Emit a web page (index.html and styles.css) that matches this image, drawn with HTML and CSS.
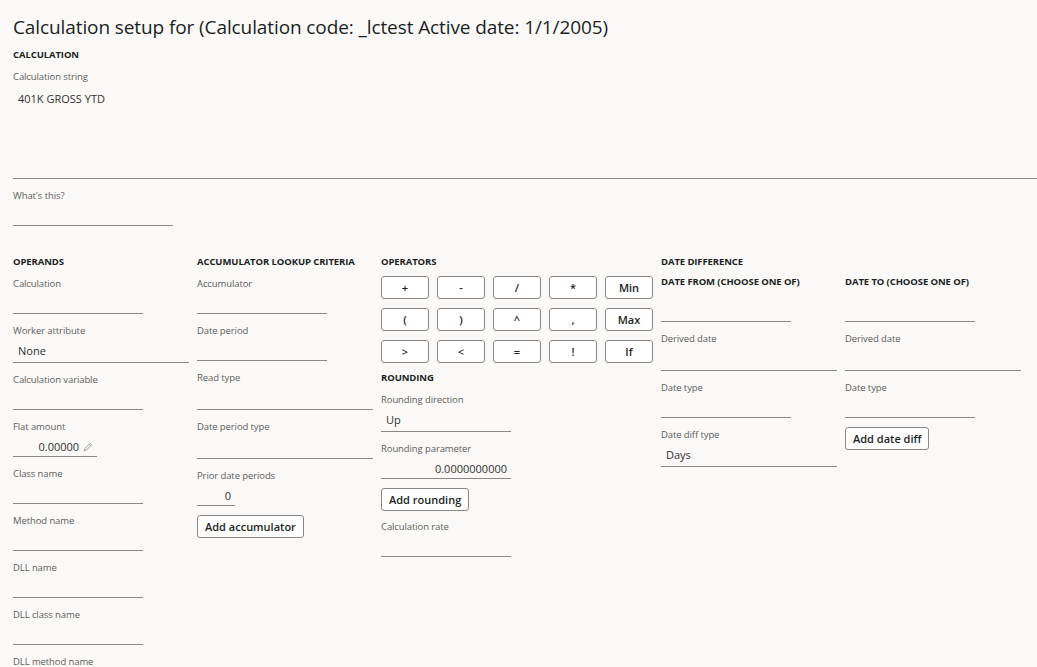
FILE: index.html
```html
<!DOCTYPE html>
<html lang="en">
<head>
    <meta charset="UTF-8">
    <meta name="viewport" content="width=device-width, initial-scale=1.0">
    <title>Calculation setup</title>
    <link rel="stylesheet" href="styles.css">
</head>
<body>

<div class="page">
    <h1 class="page-title">Calculation setup for (Calculation code: _lctest Active date: 1/1/2005)</h1>

    <!-- Calculation string -->
    <h2 class="group-head">Calculation</h2>
    <div class="field">
        <label class="field-label">Calculation string</label>
        <div class="textarea">401K GROSS YTD</div>
    </div>
    <div class="field">
        <label class="field-label">What's this?</label>
        <div class="input w160"></div>
    </div>

    <div class="sections">

        <!-- Operands -->
        <div class="col">
            <h2 class="group-head">Operands</h2>
            <div class="field">
                <label class="field-label">Calculation</label>
                <div class="input w130"></div>
            </div>
            <div class="field">
                <label class="field-label">Worker attribute</label>
                <div class="input select w176">None</div>
            </div>
            <div class="field">
                <label class="field-label">Calculation variable</label>
                <div class="input w130"></div>
            </div>
            <div class="field">
                <label class="field-label">Flat amount</label>
                <div class="input w84 num">0.00000
                    <svg class="pencil" width="10" height="10" viewBox="0 0 10 10"><path d="M7.2 1.3 L8.7 2.8 L3.4 8.1 L1.3 8.7 L1.9 6.6 Z M6.2 2.3 L7.7 3.8" fill="none" stroke="#8a8886" stroke-width="0.8" stroke-linejoin="round"/></svg>
                </div>
            </div>
            <div class="field">
                <label class="field-label">Class name</label>
                <div class="input w130"></div>
            </div>
            <div class="field">
                <label class="field-label">Method name</label>
                <div class="input w130"></div>
            </div>
            <div class="field">
                <label class="field-label">DLL name</label>
                <div class="input w130"></div>
            </div>
            <div class="field">
                <label class="field-label">DLL class name</label>
                <div class="input w130"></div>
            </div>
            <div class="field">
                <label class="field-label">DLL method name</label>
                <div class="input w130"></div>
            </div>
        </div>

        <!-- Accumulator lookup criteria -->
        <div class="col">
            <h2 class="group-head">Accumulator lookup criteria</h2>
            <div class="field">
                <label class="field-label">Accumulator</label>
                <div class="input w130"></div>
            </div>
            <div class="field">
                <label class="field-label">Date period</label>
                <div class="input w130"></div>
            </div>
            <div class="field">
                <label class="field-label">Read type</label>
                <div class="input select w176"></div>
            </div>
            <div class="field">
                <label class="field-label">Date period type</label>
                <div class="input select w176"></div>
            </div>
            <div class="field">
                <label class="field-label">Prior date periods</label>
                <div class="input w38 num">0</div>
            </div>
            <button class="action-btn">Add accumulator</button>
        </div>

        <!-- Operators and rounding -->
        <div class="col">
            <h2 class="group-head">Operators</h2>
            <div class="op-grid">
                <button class="op-btn">+</button>
                <button class="op-btn">-</button>
                <button class="op-btn">/</button>
                <button class="op-btn">*</button>
                <button class="op-btn">Min</button>
                <button class="op-btn">(</button>
                <button class="op-btn">)</button>
                <button class="op-btn">^</button>
                <button class="op-btn">,</button>
                <button class="op-btn">Max</button>
                <button class="op-btn">&gt;</button>
                <button class="op-btn">&lt;</button>
                <button class="op-btn">=</button>
                <button class="op-btn">!</button>
                <button class="op-btn">If</button>
            </div>
            <h2 class="group-head rounding-head">Rounding</h2>
            <div class="field">
                <label class="field-label">Rounding direction</label>
                <div class="input select w130">Up</div>
            </div>
            <div class="field">
                <label class="field-label">Rounding parameter</label>
                <div class="input w130 num">0.0000000000</div>
            </div>
            <button class="action-btn">Add rounding</button>
            <div class="field">
                <label class="field-label">Calculation rate</label>
                <div class="input w130"></div>
            </div>
        </div>

        <!-- Date difference -->
        <div class="col">
            <h2 class="group-head">Date difference</h2>
            <div class="date-grid">
                <div class="col">
                    <h2 class="group-head">Date from (choose one of)</h2>
                    <div class="field">
                        <div class="input tall w130"></div>
                    </div>
                    <div class="field">
                        <label class="field-label">Derived date</label>
                        <div class="input select w176"></div>
                    </div>
                    <div class="field">
                        <label class="field-label">Date type</label>
                        <div class="input w130"></div>
                    </div>
                    <div class="field">
                        <label class="field-label">Date diff type</label>
                        <div class="input select w176">Days</div>
                    </div>
                </div>
                <div class="col">
                    <h2 class="group-head">Date to (choose one of)</h2>
                    <div class="field">
                        <div class="input tall w130"></div>
                    </div>
                    <div class="field">
                        <label class="field-label">Derived date</label>
                        <div class="input select w176"></div>
                    </div>
                    <div class="field">
                        <label class="field-label">Date type</label>
                        <div class="input w130"></div>
                    </div>
                    <button class="action-btn">Add date diff</button>
                </div>
            </div>
        </div>

    </div>
</div>

</body>
</html>
```

FILE: styles.css
```css
/* General Styling */
* {
    box-sizing: border-box;
    margin: 0;
    padding: 0;
    font-family: "Open Sans", "Noto Sans", sans-serif;
}

html, body {
    overflow: hidden;
}

body {
    background: #faf9f8;
    color: #201f1e;
}

.page {
    padding: 12px 0 0 13px;
}

.page-title {
    font-size: 19px;
    font-weight: 500;
    line-height: 30px;
    margin-bottom: 3px;
    letter-spacing: -0.1px;
}

/* Section headings */
.group-head {
    font-size: 9.5px;
    font-weight: 700;
    line-height: 20px;
    text-transform: uppercase;
    letter-spacing: -0.1px;
}

/* Fields */
.field {
    margin-bottom: 5px;
}

.field-label {
    display: block;
    font-size: 9.5px;
    line-height: 20px;
    padding-top: 2px;
    color: #605e5c;
    letter-spacing: -0.1px;
}

.input {
    height: 20px;
    border-bottom: 1px solid #8a8886;
    font-size: 11px;
    line-height: 19px;
    padding: 0 5px;
    color: #323130;
}

.input.select {
    height: 22px;
    line-height: 20px;
}

.input.tall {
    height: 30px;
}

.input.num {
    text-align: right;
    padding-right: 4px;
}

.textarea {
    height: 92px;
    border-bottom: 1px solid #8a8886;
    font-size: 11px;
    line-height: 20px;
    padding: 2px 5px;
    color: #323130;
}

.pencil {
    vertical-align: -1px;
    margin-left: 1px;
}

.w38 { width: 38px; }
.w84 { width: 84px; }
.w130 { width: 130px; }
.w160 { width: 160px; }
.w176 { width: 176px; }

/* Columns */
.sections {
    display: grid;
    grid-template-columns: 184px 184px 280px auto;
    margin-top: 26px;
}

.date-grid {
    display: grid;
    grid-template-columns: 184px 184px;
}

/* Buttons */
button {
    background: #fff;
    border: 1px solid #8a8886;
    border-radius: 3px;
    color: #201f1e;
    font-size: 11px;
    font-weight: 600;
    cursor: pointer;
}

.op-grid {
    display: grid;
    grid-template-columns: repeat(5, 48px);
    column-gap: 8px;
    row-gap: 9px;
    margin-top: 4px;
}

.op-btn {
    height: 23px;
}

.action-btn {
    height: 23px;
    padding: 0 7px;
    margin: 4px 0 4px;
}

.rounding-head {
    margin-top: 5px;
}
```
